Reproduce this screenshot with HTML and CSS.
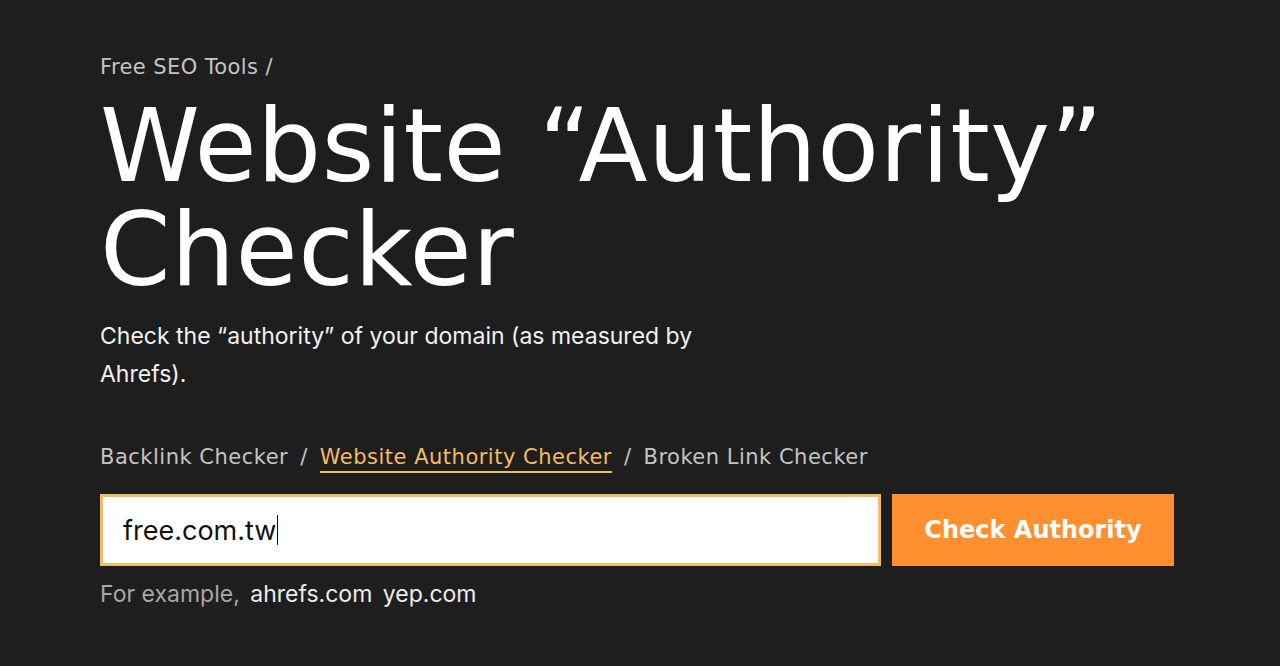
FILE: index.html
```html
<!DOCTYPE html>
<html lang="en">
<head>
<meta charset="utf-8">
<title>Website Authority Checker</title>
<link rel="stylesheet" href="styles.css">
</head>
<body>
<main class="page">
  <div class="crumb">Free SEO Tools /</div>
  <h1 class="title">Website “Authority” Checker</h1>
  <p class="lead">Check the “authority” of your domain (as measured by Ahrefs).</p>
  <nav class="tools">
    <a class="tool">Backlink Checker</a>
    <span class="sep">/</span>
    <a class="tool active">Website Authority Checker</a>
    <span class="sep">/</span>
    <a class="tool">Broken Link Checker</a>
  </nav>
  <form class="search">
    <div class="field"><span class="value">free.com.tw</span><span class="caret"></span></div>
    <button class="btn" type="button">Check Authority</button>
  </form>
  <div class="examples"><span class="ex-label">For example,</span> <span class="ex">ahrefs.com</span> <span class="ex">yep.com</span></div>
</main>
</body>
</html>
```
FILE: styles.css
```css
html, body {
  margin: 0;
  padding: 0;
  background: #1e1e1e;
  height: 100%;
}
.page {
  padding: 54px 100px 0;
  font-family: "DejaVu Sans", sans-serif;
  color: #fff;
}
.crumb {
  font-size: 21px;
  line-height: 26px;
  color: #c4c4c4;
  letter-spacing: 0.4px;
}
.title {
  margin: 14px 0 0;
  font-family: "DejaVu Sans", sans-serif;
  font-weight: 400;
  font-size: 101px;
  line-height: 104px;
  letter-spacing: 0.5px;
  color: #fff;
  width: 1080px;
}
.lead {
  margin: 15px 0 0;
  width: 625px;
  font-family: Inter, sans-serif;
  font-size: 23px;
  line-height: 38px;
  color: #f2f2f2;
}
.tools {
  margin-top: 50px;
  display: flex;
  gap: 12px;
  font-size: 21px;
  line-height: 28px;
  letter-spacing: 0.5px;
  color: #c4c4c4;
}
.tool.active {
  color: #f5bc5c;
  border-bottom: 2px solid #f5bc5c;
}
.search {
  margin: 21px 0 0;
  display: flex;
  gap: 11px;
}
.field {
  box-sizing: border-box;
  width: 781px;
  height: 72px;
  background: #ffffff;
  border: 3px solid #f2bd6a;
  display: flex;
  align-items: center;
  padding-left: 20px;
  font-family: Inter, sans-serif;
  font-size: 27px;
  color: #111;
}
.caret {
  display: inline-block;
  width: 1px;
  height: 30px;
  background: #111;
  margin-left: 1px;
}
.btn {
  width: 282px;
  height: 72px;
  border: 0;
  background: #ff8f2f;
  color: #fff;
  font-family: "DejaVu Sans", sans-serif;
  font-weight: 700;
  font-size: 24px;
}
.examples {
  margin-top: 14px;
  font-family: Inter, sans-serif;
  font-size: 23px;
  color: #a8a8a8;
}
.ex {
  color: #ececec;
  margin-left: 4px;
}
```
